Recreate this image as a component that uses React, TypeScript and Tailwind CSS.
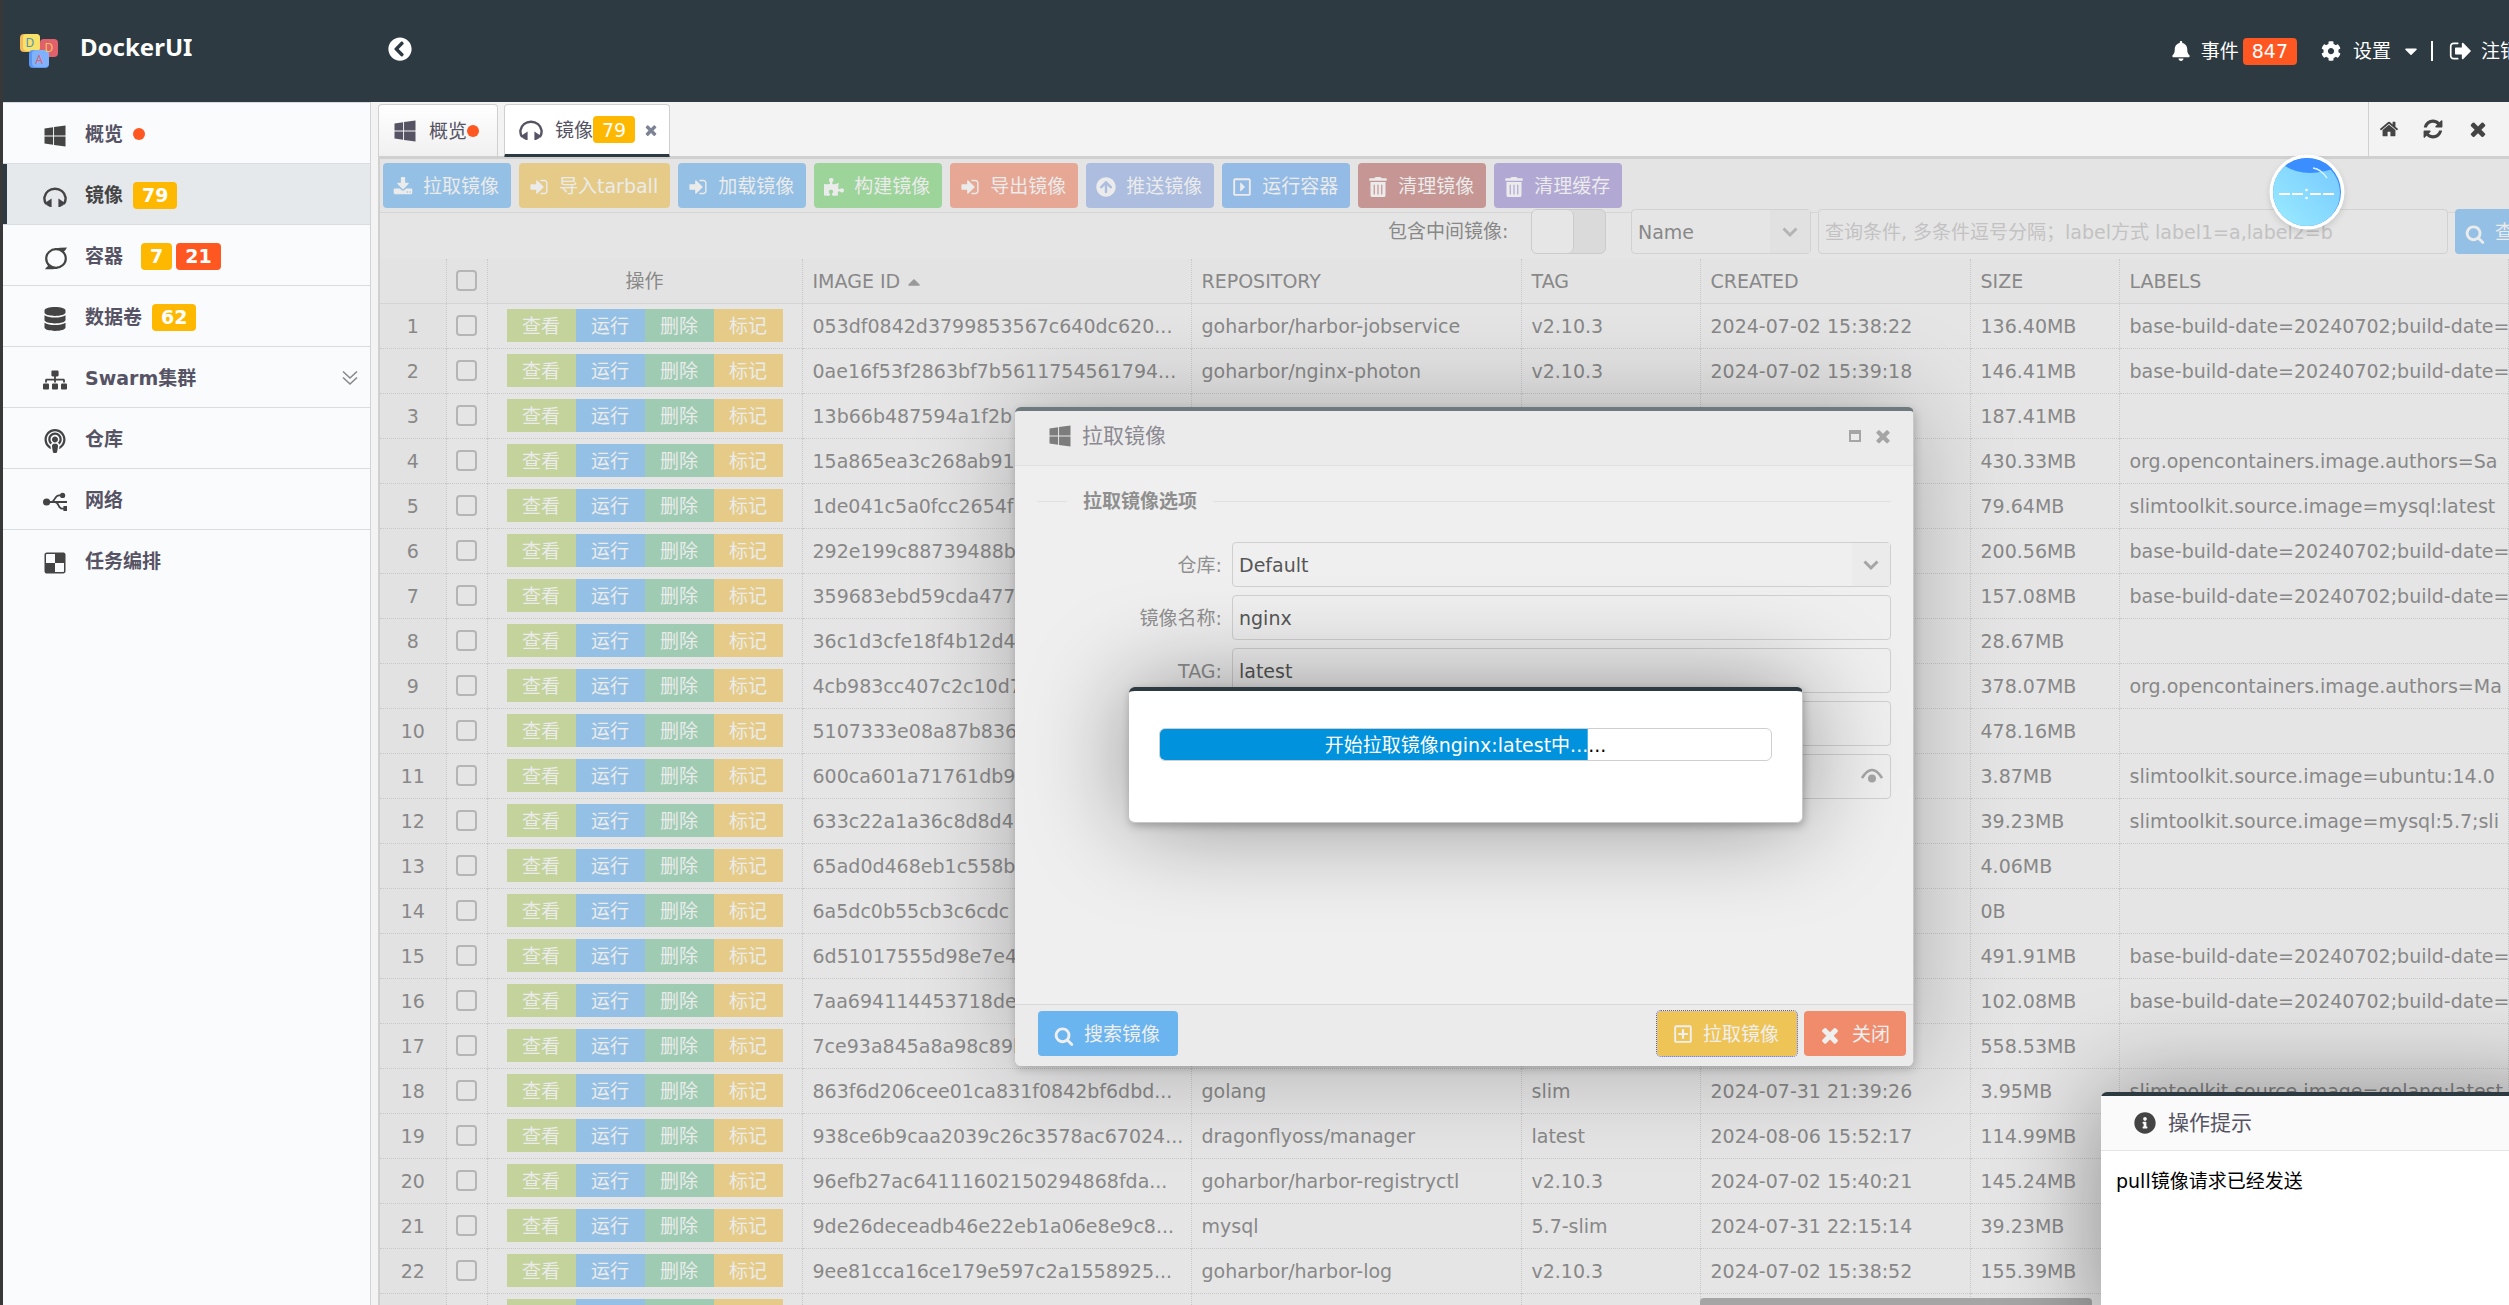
import React, { useState } from 'react';
import {
  FaWindows, FaDatabase, FaSitemap, FaPodcast, FaDelicious, FaChevronCircleLeft,
  FaBell, FaCog, FaCaretDown, FaCaretUp, FaPuzzlePiece, FaArrowCircleUp, FaRegCaretSquareRight,
  FaTrashAlt, FaInfoCircle, FaRegPlusSquare,
} from 'react-icons/fa';

type IconProps = { className?: string };

const glyph = (d: string) => ({ className }: IconProps) => (
  <svg viewBox="0 0 1792 1792" fill="currentColor" className={className} aria-hidden="true">
    <path d={d} />
  </svg>
);

const SignIn = glyph('M1312 896q0 26-19 45l-544 544q-19 19-45 19t-45-19-19-45v-288h-448q-26 0-45-19t-19-45v-384q0-26 19-45t45-19h448v-288q0-26 19-45t45-19 45 19l544 544q19 19 19 45zm352-352v704q0 119-84.5 203.5t-203.5 84.5h-320q-13 0-22.5-9.5t-9.5-22.5q-1-4-1-20t-.5-26.5 3-23.5 10-19.5 20.5-6.5h320q66 0 113-47t47-113v-704q0-66-47-113t-113-47h-312l-11.5-1-11.5-3-8-5.5-7-9-2-13.5q-1-4-1-20t-.5-26.5 3-23.5 10-19.5 20.5-6.5h320q119 0 203.5 84.5t84.5 203.5z');
const SignOut = glyph('M704 1440q0 4 1 20t.5 26.5-3 23.5-10 19.5-20.5 6.5h-320q-119 0-203.5-84.5t-84.5-203.5v-704q0-119 84.5-203.5t203.5-84.5h320q13 0 22.5 9.5t9.5 22.5q0 4 1 20t.5 26.5-3 23.5-10 19.5-20.5 6.5h-320q-66 0-113 47t-47 113v704q0 66 47 113t113 47h312l11.5 1 11.5 3 8 5.5 7 9 2 13.5zm928-544q0 26-19 45l-544 544q-19 19-45 19t-45-19-19-45v-288h-448q-26 0-45-19t-19-45v-384q0-26 19-45t45-19h448v-288q0-26 19-45t45-19 45 19l544 544q19 19 19 45z');
const Close = glyph('M1490 1322q0 40-28 68l-136 136q-28 28-68 28t-68-28l-294-294-294 294q-28 28-68 28t-68-28l-136-136q-28-28-28-68t28-68l294-294-294-294q-28-28-28-68t28-68l136-136q28-28 68-28t68 28l294 294 294-294q28-28 68-28t68 28l136 136q28 28 28 68t-28 68l-294 294 294 294q28 28 28 68z');
const Search = glyph('M1216 832q0-185-131.5-316.5t-316.5-131.5-316.5 131.5-131.5 316.5 131.5 316.5 316.5 131.5 316.5-131.5 131.5-316.5zm512 832q0 52-38 90t-90 38q-54 0-90-38l-343-342q-179 124-399 124-143 0-273.5-55.5t-225-150-150-225-55.5-273.5 55.5-273.5 150-225 225-150 273.5-55.5 273.5 55.5 225 150 150 225 55.5 273.5q0 220-124 399l343 343q37 37 37 90z');
const Download = glyph('M1344 1344q0-26-19-45t-45-19-45 19-19 45 19 45 45 19 45-19 19-45zm256 0q0-26-19-45t-45-19-45 19-19 45 19 45 45 19 45-19 19-45zm128-224v320q0 40-28 68t-68 28h-1472q-40 0-68-28t-28-68v-320q0-40 28-68t68-28h465l135 136q58 56 136 56t136-56l136-136h464q40 0 68 28t28 68zm-325-569q17 41-14 70l-448 448q-18 19-45 19t-45-19l-448-448q-31-29-14-70 17-39 59-39h256v-448q0-26 19-45t45-19h256q26 0 45 19t19 45v448h256q42 0 59 39z');
const Home = glyph('M1472 992v480q0 26-19 45t-45 19h-384v-384h-256v384h-384q-26 0-45-19t-19-45v-480q0-1 .5-3t.5-3l575-474 575 474q1 2 1 6zm223-69l-62 74q-8 9-21 11h-3q-13 0-21-7l-692-577-692 577q-12 8-24 7-13-2-21-11l-62-74q-8-10-7-23.5t11-21.5l719-599q32-26 76-26t76 26l244 204v-195q0-14 9-23t23-9h192q14 0 23 9t9 23v408l219 182q10 8 11 21.5t-7 23.5z');
const Refresh = glyph('M1639 1056q0 5-1 7-64 268-268 434.5t-478 166.5q-146 0-282.5-55t-243.5-157l-129 129q-19 19-45 19t-45-19-19-45v-448q0-26 19-45t45-19h448q26 0 45 19t19 45-19 45l-137 137q71 66 161 102t187 36q134 0 250-65t186-179q11-17 53-117 8-23 30-23h192q13 0 22.5 9.5t9.5 22.5zm25-800v448q0 26-19 45t-45 19h-448q-26 0-45-19t-19-45 19-45l138-138q-148-137-349-137-134 0-250 65t-186 179q-11 17-53 117-8 23-30 23h-199q-13 0-22.5-9.5t-9.5-22.5v-7q65-268 270-434.5t480-166.5q146 0 284 55.5t245 156.5l130-129q19-19 45-19t45 19 19 45z');

const Headphones = ({ className }: IconProps) => (
  <svg viewBox="0 0 24 24" fill="none" className={className} aria-hidden="true">
    <path d="M3.2 19A10.6 9.8 0 1 1 20.8 19" stroke="currentColor" strokeWidth="2.4" />
    <path d="M2.6 17.4 8.6 13.4V22H7L3.4 20zM21.4 17.4 15.4 13.4V22H17L20.6 20z" fill="currentColor" />
  </svg>
);

const Ring = ({ className }: IconProps) => (
  <svg viewBox="0 0 24 24" fill="none" className={className} aria-hidden="true">
    <ellipse cx="13" cy="12.500" rx="9.800" ry="9.300" stroke="currentColor" strokeWidth="2.200" />
    <path d="M11 2.600Q17 1.500 24 1.500 23 3.500 21 5.500L22.500 8 18 4.500zM15 22.400Q9 23.500 2 23.300 3 21.500 5 20L3.500 17 8 20.500z" fill="currentColor" />
  </svg>
);

const Usb = ({ className }: IconProps) => (
  <svg viewBox="0 0 24 24" fill="none" stroke="currentColor" className={className} aria-hidden="true">
    <circle cx="3.6" cy="12" r="3.6" fill="currentColor" stroke="none" />
    <circle cx="19.6" cy="5.4" r="2.6" fill="currentColor" stroke="none" />
    <path d="M20.4 16H24v5h-3.600z" fill="currentColor" stroke="none" />
    <path d="M4 12H24M8 12C12 12 11.500 5.400 16 5.400H18M12 12C16 12 15 18.600 19 18.600H21" strokeWidth="1.800" />
  </svg>
);

const Chevron = ({ className }: IconProps) => (
  <svg viewBox="0 0 16 16" fill="none" className={className} aria-hidden="true">
    <path d="M1.500 4.500 8 11 14.500 4.500" stroke="currentColor" strokeWidth="3" />
  </svg>
);

const Logo = () => (
  <svg viewBox="0 0 40 36" className="h-10 w-10" aria-hidden="true">
    <rect x="20" y="6" width="18" height="18" rx="4" fill="#e0606c" />
    <rect x="0" y="1" width="20" height="18" rx="4" fill="#f3b95c" />
    <rect x="3" y="1" width="17" height="17" rx="4" fill="#f8e169" />
    <rect x="9" y="17" width="20" height="18" rx="4" fill="#5c97f5" />
    <rect x="12" y="17" width="17" height="17" rx="4" fill="#80b2fb" />
    <g fontSize="12" fontFamily="Noto Sans, sans-serif" textAnchor="middle">
      <text x="10" y="14" fill="#4f93b5">D</text>
      <text x="29" y="19" fill="#f5c35a">D</text>
      <text x="19" y="31" fill="#e0606c">A</text>
    </g>
  </svg>
);

const menu = [
  { label: '概览', icon: FaWindows, dot: true },
  { label: '镜像', icon: Headphones, counts: [79], active: true },
  { label: '容器', icon: Ring, counts: [7, 21] },
  { label: '数据卷', icon: FaDatabase, counts: [62] },
  { label: 'Swarm集群', icon: FaSitemap, children: true },
  { label: '仓库', icon: FaPodcast },
  { label: '网络', icon: Usb },
  { label: '任务编排', icon: FaDelicious },
];

const tools = [
  { label: '拉取镜像', icon: Download, color: 'bg-[#94c0e5]' },
  { label: '导入tarball', icon: SignIn, color: 'bg-[#e5cb87]' },
  { label: '加载镜像', icon: SignIn, color: 'bg-[#94c0e5]' },
  { label: '构建镜像', icon: FaPuzzlePiece, color: 'bg-[#9cd49a]' },
  { label: '导出镜像', icon: SignIn, color: 'bg-[#e6a794]' },
  { label: '推送镜像', icon: FaArrowCircleUp, color: 'bg-[#acbddf]' },
  { label: '运行容器', icon: FaRegCaretSquareRight, color: 'bg-[#94bbe5]' },
  { label: '清理镜像', icon: FaTrashAlt, color: 'bg-[#c59693]' },
  { label: '清理缓存', icon: FaTrashAlt, color: 'bg-[#b1a8d4]' },
];

const rowActions = [
  { label: '查看', color: 'bg-[#c3d39b]' },
  { label: '运行', color: 'bg-[#94c0e5]' },
  { label: '删除', color: 'bg-[#9fcbb3]' },
  { label: '标记', color: 'bg-[#e5cb87]' },
];

const harbor = 'base-build-date=20240702;build-date=20240702';

const images = [
  ['053df0842d3799853567c640dc620...', 'goharbor/harbor-jobservice', 'v2.10.3', '2024-07-02 15:38:22', '136.40MB', harbor],
  ['0ae16f53f2863bf7b5611754561794...', 'goharbor/nginx-photon', 'v2.10.3', '2024-07-02 15:39:18', '146.41MB', harbor],
  ['13b66b487594a1f2b', '', '', '', '187.41MB', ''],
  ['15a865ea3c268ab91', '', '', '', '430.33MB', 'org.opencontainers.image.authors=Sa'],
  ['1de041c5a0fcc2654f', '', '', '', '79.64MB', 'slimtoolkit.source.image=mysql:latest'],
  ['292e199c88739488b', '', '', '', '200.56MB', harbor],
  ['359683ebd59cda477', '', '', '', '157.08MB', harbor],
  ['36c1d3cfe18f4b12d4', '', '', '', '28.67MB', ''],
  ['4cb983cc407c2c10d7', '', '', '', '378.07MB', 'org.opencontainers.image.authors=Ma'],
  ['5107333e08a87b836', '', '', '', '478.16MB', ''],
  ['600ca601a71761db9', '', '', '', '3.87MB', 'slimtoolkit.source.image=ubuntu:14.0'],
  ['633c22a1a36c8d8d4', '', '', '', '39.23MB', 'slimtoolkit.source.image=mysql:5.7;sli'],
  ['65ad0d468eb1c558b', '', '', '', '4.06MB', ''],
  ['6a5dc0b55cb3c6cdc', '', '', '', '0B', ''],
  ['6d51017555d98e7e4', '', '', '', '491.91MB', harbor],
  ['7aa694114453718de', '', '', '', '102.08MB', harbor],
  ['7ce93a845a8a98c89b', '', '', '', '558.53MB', ''],
  ['863f6d206cee01ca831f0842bf6dbd...', 'golang', 'slim', '2024-07-31 21:39:26', '3.95MB', 'slimtoolkit.source.image=golang:latest'],
  ['938ce6b9caa2039c26c3578ac67024...', 'dragonflyoss/manager', 'latest', '2024-08-06 15:52:17', '114.99MB', ''],
  ['96efb27ac64111602150294868fda...', 'goharbor/harbor-registryctl', 'v2.10.3', '2024-07-02 15:40:21', '145.24MB', ''],
  ['9de26deceadb46e22eb1a06e8e9c8...', 'mysql', '5.7-slim', '2024-07-31 22:15:14', '39.23MB', ''],
  ['9ee81cca16ce179e597c2a1558925...', 'goharbor/harbor-log', 'v2.10.3', '2024-07-02 15:38:52', '155.39MB', ''],
  ['', '', '', '', '', ''],
];

function Count({ value, color }: { value: number; color: string }) {
  return <span className={`inline-flex h-[27px] items-center rounded-sm px-[9px] text-white ${color}`}>{value}</span>;
}

function Header() {
  return (
    <header className="-mr-2.5 flex h-[102px] shrink-0 items-center bg-[#2d3a42] text-white">
      <div className="flex w-[385px] items-center gap-5 pl-[17px]">
        <Logo />
        <h1 className="mb-2 font-['Noto_Sans'] text-2xl font-bold">DockerUI</h1>
      </div>
      <button aria-label="收起菜单" className="mb-1"><FaChevronCircleLeft className="h-6 w-6" /></button>
      <nav className="ml-auto flex items-center">
        <a href="#events" className="flex items-center gap-1">
          <FaBell className="mr-1 h-5 w-6" />事件
          <Count value={847} color="bg-[#ff5722]" />
        </a>
        <a href="#settings" className="ml-6 flex items-center">
          <FaCog className="mr-3 h-5 w-5" />设置
          <FaCaretDown className="ml-3 h-5 w-4" />
        </a>
        <span className="mx-3 h-5 w-0.5 bg-white" />
        <a href="#logout" className="ml-1 flex items-center whitespace-nowrap">
          <SignOut className="mr-2 h-6 w-6" />注销
        </a>
      </nav>
    </header>
  );
}

function Sidebar() {
  return (
    <aside className="w-[368px] shrink-0 border-r border-[#d4d4d6] bg-[#fafbfd] font-bold text-[#565464]">
      <ul className="border-t border-[#d9dce0]">
        {menu.map(({ label, icon: Icon, dot, counts, active, children }) => (
          <li key={label} className="[&:not(:last-child)]:border-b border-[#d9dce0]">
            <a
              href="#menu"
              className={`flex h-[60px] items-center border-l-4 pl-9 pt-0.5 ${active ? 'border-[#2d3a42] bg-[#e5e9ec] text-[#444]' : 'border-transparent'}`}
            >
              <Icon className="mt-1 mr-[18px] h-6 w-6 text-[#444]" />
              <span>{label}</span>
              {dot && <span className="ml-2.5 h-3 w-3 rounded-full bg-[#ff5722]" />}
              {counts && (
                <span className={`flex gap-1 ${counts.length > 1 ? 'ml-[18px]' : 'ml-2.5'}`}>
                  {counts.map((c, i) => (
                    <Count key={c} value={c} color={i === 0 ? 'bg-[#ffb800]' : 'bg-[#ff5722]'} />
                  ))}
                </span>
              )}
              {children && (
                <svg viewBox="0 0 16 16" className="ml-auto mr-3 h-4 w-4" fill="none" stroke="#888" strokeWidth="1.600">
                  <path d="M1 1.500 8 8 15 1.500M1 7.500 8 14 15 7.500" />
                </svg>
              )}
            </a>
          </li>
        ))}
      </ul>
    </aside>
  );
}

function TabBar() {
  return (
    <div className="flex h-[55px] shrink-0 bg-[#f3f3f3] text-[#565464]">
      <div className="flex flex-1 items-end gap-[6px] border-b border-[#d0d0d0]">
        <button className="flex h-[52px] items-center rounded-t border border-b-0 border-[#d0d0d0] bg-gradient-to-b from-white to-[#f0f0f0] pl-3.5 pr-[18px]">
          <FaWindows className="mr-3 h-6 w-6" />概览
          <span className="h-3 w-3 rounded-full bg-[#ff5722]" />
        </button>
        <button className="-mb-0.5 flex h-[54px] items-center rounded-t border border-b-4 border-[#d0d0d0] border-b-[#2d3a42] bg-white pl-3.5 pr-2.5">
          <Headphones className="mr-3 h-6 w-6" />镜像
          <Count value={79} color="bg-[#ffb800]" />
          <Close className="ml-2 h-4 w-4 text-[#7d8295]" />
        </button>
      </div>
      <div className="flex w-[141px] items-center justify-between border-b border-l border-[#d0d0d0] pl-2.5 pr-5 text-[#444]">
        <button aria-label="主页"><Home className="h-5 w-5" /></button>
        <button aria-label="刷新"><Refresh className="h-[22px] w-[22px]" /></button>
        <button aria-label="关闭"><Close className="h-[22px] w-[22px]" /></button>
      </div>
    </div>
  );
}

function ImageTable() {
  return (
    <table className="w-full table-fixed border-collapse text-left">
      <colgroup>
        <col className="w-[66px]" />
        <col className="w-[41px]" />
        <col className="w-[315px]" />
        <col className="w-[389px]" />
        <col className="w-[330px]" />
        <col className="w-[179px]" />
        <col className="w-[270px]" />
        <col className="w-[149px]" />
        <col />
      </colgroup>
      <thead>
        <tr className="h-[44px] border-b border-[#d4d4d4] bg-[#e3e3e3] [&>th]:border-r [&>th]:border-dotted [&>th]:border-r-[#c8c8c8] [&>th]:font-normal">
          <th />
          <th><input type="checkbox" aria-label="全选" className="mx-auto block h-[21px] w-[21px] appearance-none rounded border-2 border-[#b5b5b5]" /></th>
          <th className="text-center">操作</th>
          <th className="px-2.5">IMAGE ID <FaCaretUp className="inline h-5 w-4 text-[#999]" /></th>
          <th className="px-2.5">REPOSITORY</th>
          <th className="px-2.5">TAG</th>
          <th className="px-2.5">CREATED</th>
          <th className="px-2.5">SIZE</th>
          <th className="px-2.5">LABELS</th>
        </tr>
      </thead>
      <tbody>
        {images.map((row, i) => (
          <tr key={i} className="h-[45px] border-b border-dotted border-[#c8c8c8] [&>td]:border-r [&>td]:border-dotted [&>td]:border-r-[#c8c8c8]">
            <td className="bg-[#e2e2e2] text-center">{i + 1}</td>
            <td><input type="checkbox" aria-label={`选择 ${i + 1}`} className="mx-auto block h-[21px] w-[21px] appearance-none rounded border-2 border-[#b5b5b5]" /></td>
            <td>
              <div className="flex px-[19px] text-[#ebebeb]">
                {rowActions.map((a) => (
                  <button key={a.label} className={`h-[33px] flex-1 ${a.color}`}>{a.label}</button>
                ))}
              </div>
            </td>
            {row.map((cell, j) => (
              <td key={j} className="overflow-hidden whitespace-nowrap px-2.5">{cell}</td>
            ))}
          </tr>
        ))}
      </tbody>
    </table>
  );
}

function ImagePanel() {
  return (
    <section className="min-h-0 flex-1 overflow-hidden border-l-2 border-t-2 border-[#d0d0d0] bg-[#e5e5e5] text-[#888]">
      <div className="flex h-[54px] items-center gap-2 border-b border-[#d6d6d6] bg-[#e4e4e4] pl-[3px] text-[#ebebeb]">
        {tools.map(({ label, icon: Icon, color }) => (
          <button key={label} className={`flex h-[45px] items-center gap-2.5 rounded-sm pl-2.5 pr-3 ${color}`}>
            <Icon className="mt-0.5 h-5 w-5" />{label}
          </button>
        ))}
      </div>
      <div className="relative -mr-9 -mt-1 flex h-[50px] items-start">
        <label htmlFor="mid" className="ml-[1008px] mt-2 w-[123px] shrink-0 whitespace-nowrap">包含中间镜像:</label>
        <button id="mid" role="switch" aria-checked="false" className="ml-5 h-[45px] w-[75px] shrink-0 overflow-hidden rounded-md border border-[#cbcbcb] bg-[#dadada]">
          <span className="block h-full w-[42px] rounded-r-md border-r border-[#cbcbcb] bg-[#e6e6e6]" />
        </button>
        <div className="relative ml-[25px] w-[180px] shrink-0">
          <select aria-label="查询字段" className="h-[45px] w-full appearance-none rounded-sm border border-[#d2d2d2] bg-[#e5e5e5] px-1.5">
            <option>Name</option>
          </select>
          <span className="pointer-events-none absolute inset-y-px right-px flex w-10 items-center justify-center bg-[#e1e1e1]">
            <Chevron className="h-4 w-4 text-[#b4b4b4]" />
          </span>
        </div>
        <input
          aria-label="查询条件"
          placeholder="查询条件, 多条件逗号分隔；label方式 label1=a,label2=b"
          className="ml-[7px] h-[45px] min-w-0 flex-1 rounded-sm border border-[#d2d2d2] bg-[#e5e5e5] px-1.5 placeholder:text-[#c2c2c2]"
        />
        <button className="ml-[7px] flex h-[45px] w-[90px] shrink-0 items-center gap-2.5 rounded-sm bg-[#94c0e5] pl-2.5 text-[#ebebeb]">
          <Search className="mt-1 h-5 w-5" />查询
        </button>
      </div>
      <ImageTable />
    </section>
  );
}

const fieldClass = 'h-[45px] w-full appearance-none rounded-sm border border-[#cfcfcf] bg-transparent px-1.5 text-[#565656]';

function Field({ id, label, children }: { id: string; label: string; children: React.ReactNode }) {
  return (
    <div className="flex items-center gap-2.5">
      <label htmlFor={id} className="w-[185px] text-right">{label}</label>
      <div className="relative flex-1">{children}</div>
    </div>
  );
}

function PullDialog() {
  const [name, setName] = useState('nginx');
  const [tag, setTag] = useState('latest');

  return (
    <div role="dialog" aria-label="拉取镜像" className="absolute left-[1012px] top-[407px] flex h-[659px] w-[899px] flex-col overflow-hidden rounded-md border-r border-t-4 border-[#c8c8c8] border-t-[#6f7a7f] bg-[#efefef] text-[#8f8f8f] shadow-[0_0_100px_rgba(0,0,0,0.25),1px_3px_8px_rgba(0,0,0,0.2)]">
      <div className="flex h-[55px] items-center border-b border-[#dfdfdf] bg-[#ebebeb] pb-1 pl-[33px] pr-5 text-[21px] text-[#8b8992]">
        <FaWindows className="mr-2.5 h-6 w-6 text-[#7d7d7d]" />
        <h2>拉取镜像</h2>
        <button aria-label="最大化" className="ml-auto mr-3 h-3 w-3 border-2 border-t-4 border-[#a5a5a5]" />
        <button aria-label="关闭"><Close className="h-5 w-5 text-[#a5a5a5]" /></button>
      </div>
      <form className="flex flex-1 flex-col gap-2 px-[22px]">
        <div className="mb-5 flex h-[48px] items-center pt-[22px] font-bold">
          <span className="mr-4 h-px w-[30px] bg-[#e0e0e0]" />拉取镜像选项
          <span className="ml-4 h-px flex-1 bg-[#e0e0e0]" />
        </div>
        <Field id="registry" label="仓库:">
          <select id="registry" className={fieldClass}><option>Default</option></select>
          <span className="pointer-events-none absolute inset-y-px right-px flex w-[38px] items-center justify-center bg-[#ebebeb]">
            <Chevron className="h-4 w-4 text-[#a5a5a5]" />
          </span>
        </Field>
        <Field id="name" label="镜像名称:">
          <input id="name" value={name} onChange={(e) => setName(e.target.value)} className={fieldClass} />
        </Field>
        <Field id="tag" label="TAG:">
          <input id="tag" value={tag} onChange={(e) => setTag(e.target.value)} className={fieldClass} />
        </Field>
        <Field id="account" label=""><input id="account" className={fieldClass} /></Field>
        <Field id="password" label="">
          <input id="password" type="password" className={fieldClass} />
          <svg viewBox="0 0 22 16" className="absolute right-2 top-3.5 h-4 w-[22px]" fill="none" aria-hidden="true">
            <path d="M1 10Q11-6 21 10" stroke="#a5a5a5" strokeWidth="2.500" />
            <circle cx="11" cy="10.500" r="4" fill="#a5a5a5" />
          </svg>
        </Field>
      </form>
      <div className="flex h-[62px] items-center border-t border-[#d9d9d9] bg-[#ebebeb] pb-1 pl-[23px] pr-[7px] text-[#efefef]">
        <button className="flex h-[45px] items-center gap-2.5 rounded-sm bg-[#6ab4ef] pl-4 pr-[18px]">
          <Search className="mt-1 h-5 w-5" />搜索镜像
        </button>
        <button className="ml-auto flex h-[45px] items-center gap-2.5 rounded-sm bg-[#efc457] pl-4 pr-[18px] outline-1 outline-dotted outline-[#4a5ae0]">
          <FaRegPlusSquare className="h-5 w-5" />拉取镜像
        </button>
        <button className="ml-[7px] flex h-[45px] items-center gap-2.5 rounded-sm bg-[#f08c6c] pl-3.5 pr-4">
          <Close className="mt-0.5 h-6 w-6" />关闭
        </button>
      </div>
    </div>
  );
}

function ProgressDialog() {
  const percent = 70;
  const text = '开始拉取镜像nginx:latest中......';

  return (
    <div role="dialog" aria-label="进度" className="absolute left-[1126px] top-[687px] h-[136px] w-[674px] rounded-md border-b border-r border-t-4 border-[#c8c8c8] border-t-[#2d3a42] bg-white px-[30px] pt-[37px] text-black shadow-[0_0_100px_rgba(0,0,0,0.4),1px_3px_8px_rgba(0,0,0,0.25)]">
      <div className="relative h-[33px] overflow-hidden rounded-md border border-[#cfcfcf]">
        <div className="flex h-full items-center justify-center">{text}</div>
        <div
          aria-hidden="true"
          className="absolute inset-0 flex items-center justify-center bg-[#0092dc] text-white"
          style={{ clipPath: `inset(0 ${100 - percent}% 0 0)` }}
        >
          {text}
        </div>
      </div>
    </div>
  );
}

function Toast() {
  return (
    <div role="status" className="absolute -bottom-10 left-[2098px] right-[-60px] top-[1092px] rounded-md border-t-4 border-[#2d3a42] bg-white text-black shadow-[0_0_100px_rgba(0,0,0,0.4)]">
      <div className="flex h-[55px] items-center border-b border-[#e4e4e4] bg-[#fafafa] pl-[33px] text-[21px] text-[#565464]">
        <FaInfoCircle className="mr-3 h-[22px] w-[22px] text-[#444]" />操作提示
      </div>
      <p className="px-[15px] py-4">pull镜像请求已经发送</p>
    </div>
  );
}

function Clock() {
  return (
    <svg viewBox="0 0 84 84" className="absolute left-[2262px] top-[150px] h-[84px] w-[84px] drop-shadow-md" aria-hidden="true">
      <defs>
        <linearGradient id="water" x1="0" y1="1" x2="1" y2="0">
          <stop offset="0" stopColor="#9cecff" />
          <stop offset="1" stopColor="#74c8ff" />
        </linearGradient>
        <clipPath id="orb"><circle cx="42" cy="42" r="34" /></clipPath>
      </defs>
      <circle cx="42" cy="42" r="37.500" fill="#fff" />
      <g clipPath="url(#orb)">
        <rect width="84" height="84" fill="#3a8eff" />
        <circle cx="41" cy="43" r="34" fill="url(#water)" />
        <path d="M8 6H76V16Q42 30 20 16Z" fill="#3a8eff" />
      </g>
      <path d="M48 18Q56 19 62 28" stroke="#d9f4ff" strokeWidth="1.500" fill="none" />
      <path d="M14 44H25M27 44H38M45 44H56M58 44H69" stroke="#fff" strokeWidth="2" />
      <circle cx="41.500" cy="40" r="1.300" fill="#fff" />
      <circle cx="41.500" cy="48" r="1.300" fill="#fff" />
    </svg>
  );
}

export default function App() {
  return (
    <div className="relative flex h-screen flex-col overflow-hidden border-l-[3px] border-[#383838] bg-[#f3f3f3] font-['DejaVu_Sans','Noto_Sans_CJK_SC',sans-serif] text-[19px] leading-7">
      <Header />
      <div className="flex min-h-0 flex-1">
        <Sidebar />
        <main className="ml-[7px] flex min-w-0 flex-1 flex-col">
          <TabBar />
          <ImagePanel />
        </main>
      </div>
      <div className="absolute bottom-0 left-[1697px] h-[7px] w-[392px] rounded-t-sm bg-[#a5a5a5]" />
      <Clock />
      <PullDialog />
      <ProgressDialog />
      <Toast />
    </div>
  );
}
